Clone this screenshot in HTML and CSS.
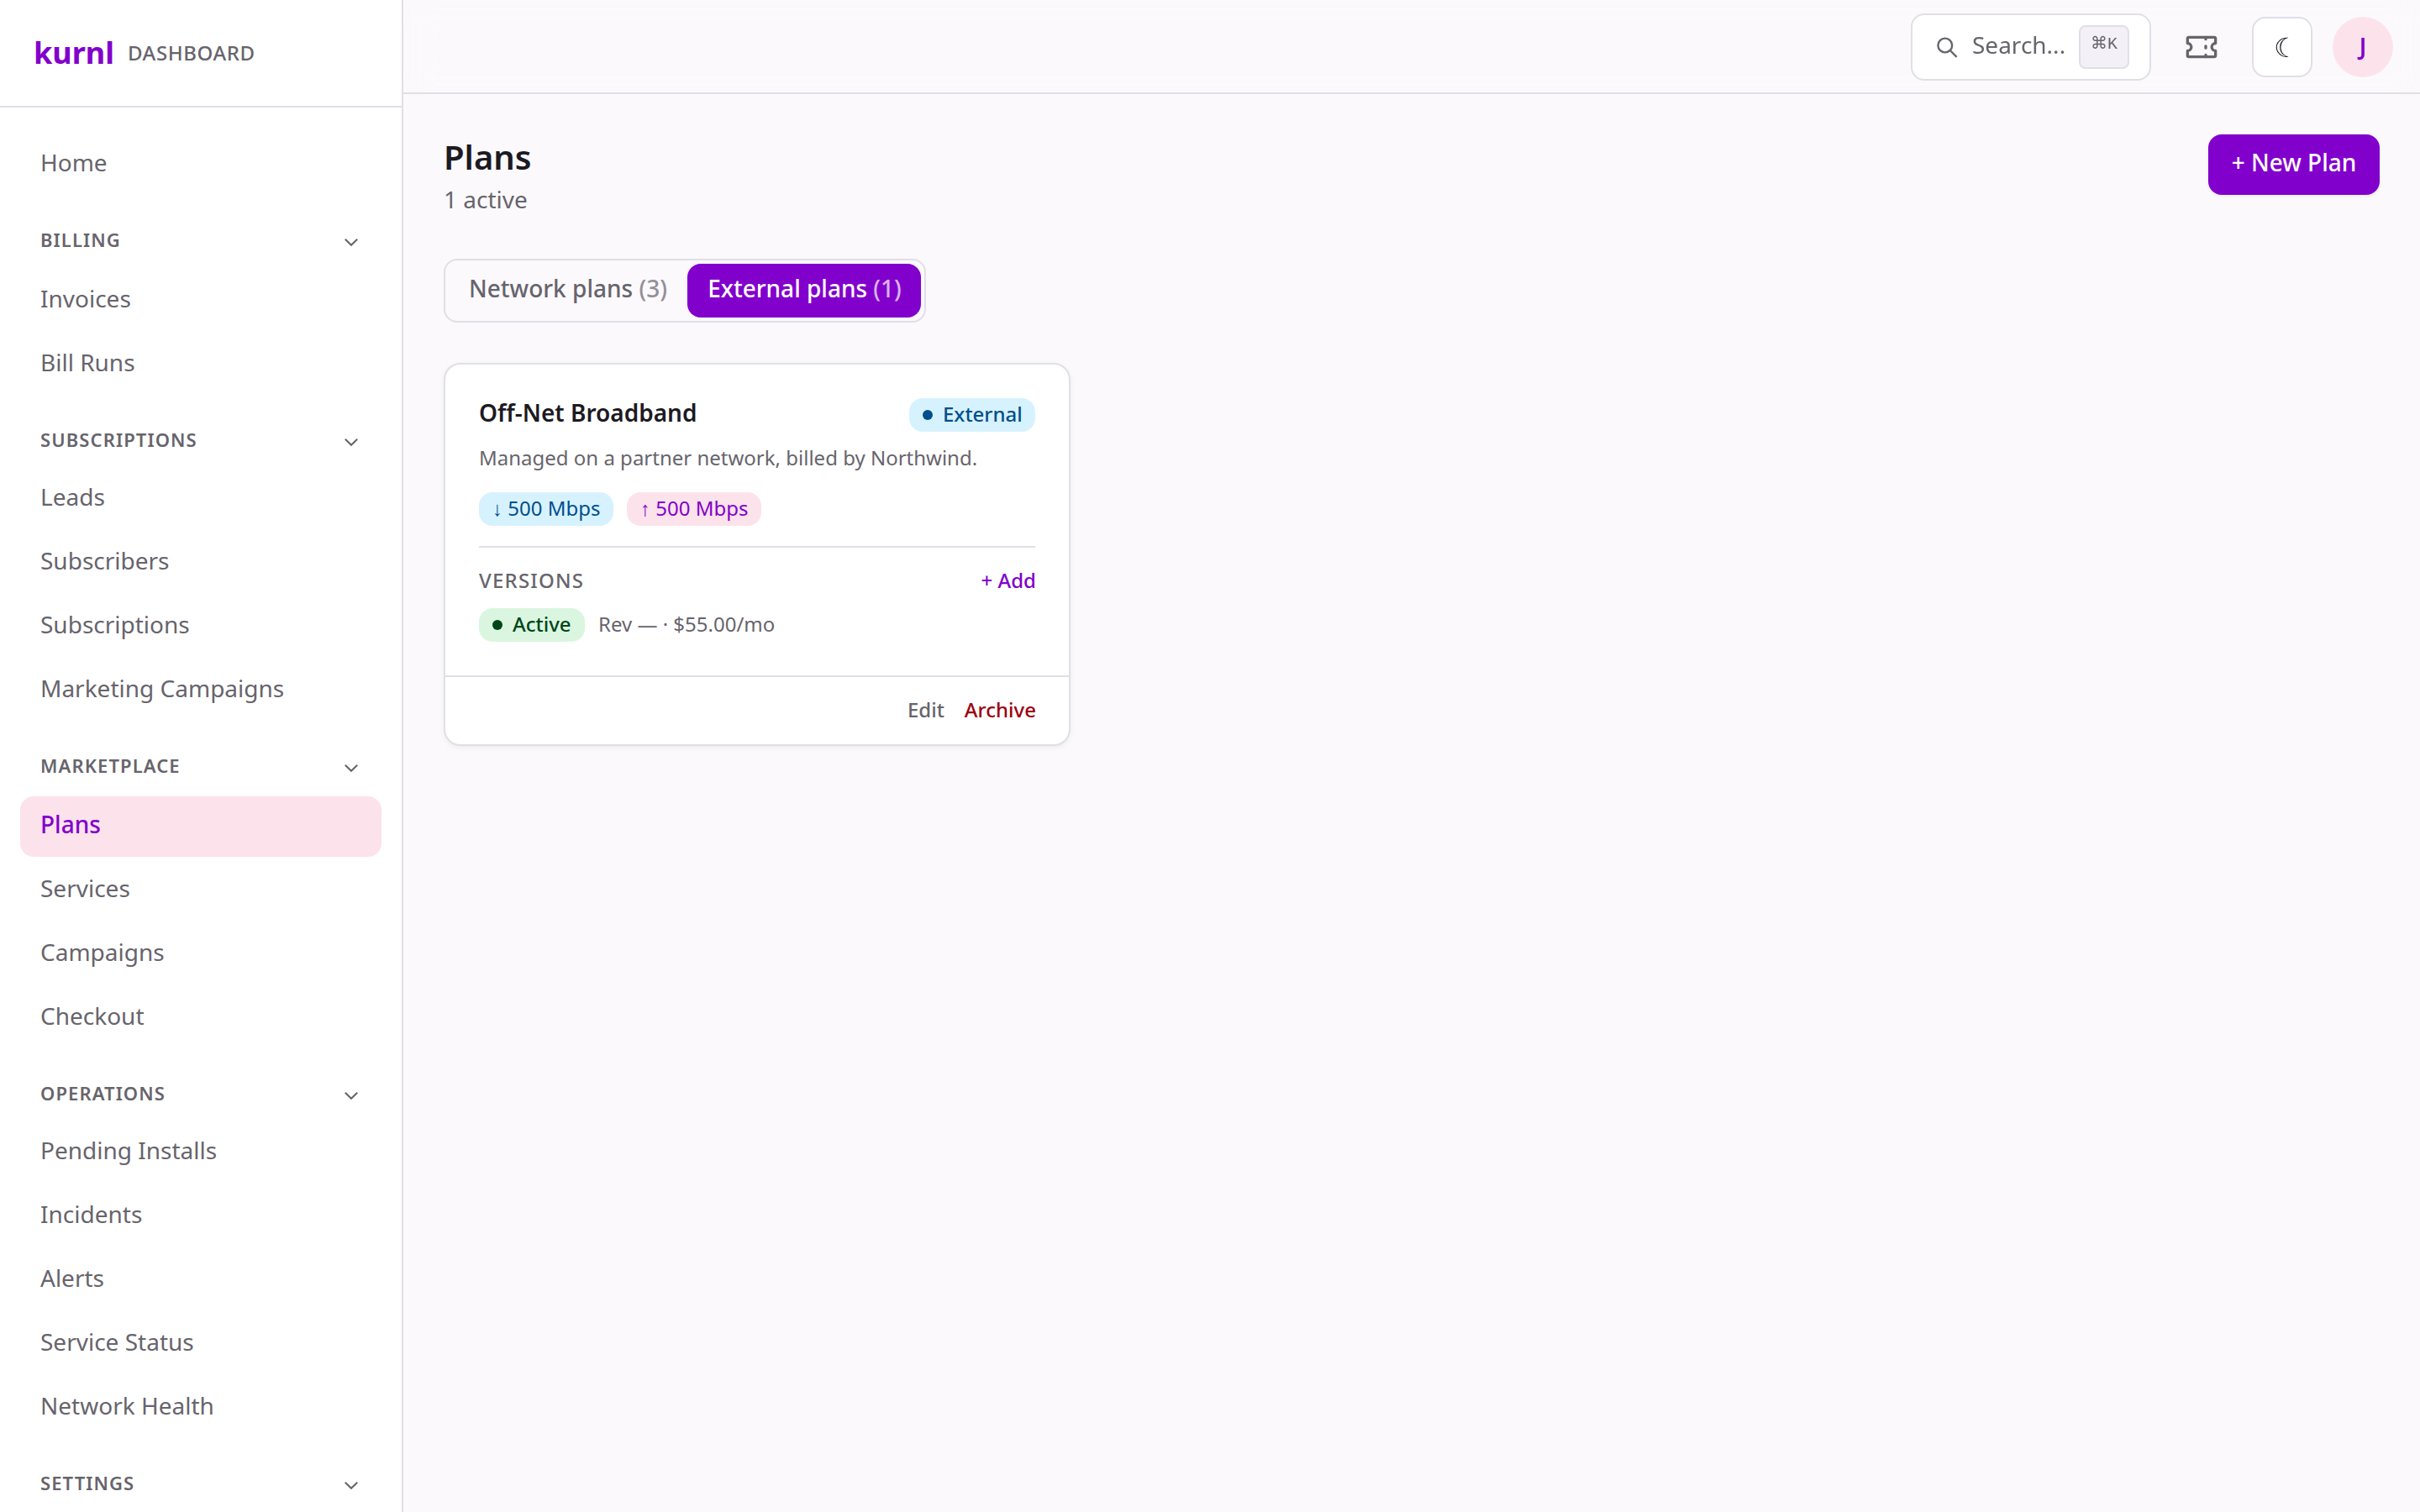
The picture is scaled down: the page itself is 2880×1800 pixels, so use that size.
FILE: index.html
```html
<!DOCTYPE html>
<html lang="en">
<head>
<meta charset="utf-8">
<title>Plans – kurnl dashboard</title>
<link rel="stylesheet" href="styles.css">
</head>
<body>
<svg class="sprite" width="0" height="0" aria-hidden="true">
  <symbol id="chevron" viewBox="0 0 24 24"><path d="M4.8 9.8 12 16.8 19.2 9.8" fill="none" stroke="currentColor" stroke-width="2.1"/></symbol>
</svg>
<div class="app">
  <aside class="sidebar">
    <div class="brand"><span class="logo">kurnl</span><span class="brand-tag">DASHBOARD</span></div>
    <nav class="nav">
      <a class="item">Home</a>
      <section class="group">
        <h2 class="group-head">Billing<svg class="chev"><use href="#chevron"/></svg></h2>
        <a class="item">Invoices</a>
        <a class="item">Bill Runs</a>
      </section>
      <section class="group tight">
        <h2 class="group-head">Subscriptions<svg class="chev"><use href="#chevron"/></svg></h2>
        <a class="item">Leads</a>
        <a class="item">Subscribers</a>
        <a class="item">Subscriptions</a>
        <a class="item">Marketing Campaigns</a>
      </section>
      <section class="group">
        <h2 class="group-head">Marketplace<svg class="chev"><use href="#chevron"/></svg></h2>
        <a class="item active">Plans</a>
        <a class="item">Services</a>
        <a class="item">Campaigns</a>
        <a class="item">Checkout</a>
      </section>
      <section class="group tight">
        <h2 class="group-head">Operations<svg class="chev"><use href="#chevron"/></svg></h2>
        <a class="item">Pending Installs</a>
        <a class="item">Incidents</a>
        <a class="item">Alerts</a>
        <a class="item">Service Status</a>
        <a class="item">Network Health</a>
      </section>
      <section class="group">
        <h2 class="group-head">Settings<svg class="chev"><use href="#chevron"/></svg></h2>
      </section>
    </nav>
  </aside>
  <div class="main">
    <header class="topbar">
      <button class="search">
        <svg class="search-icon" viewBox="0 0 28 28" fill="none" stroke="currentColor" stroke-width="2.4"><circle cx="10.8" cy="12" r="8.4"/><path d="M16.8 18 24.6 25.8"/></svg>
        <span class="search-label">Search...</span>
        <kbd class="kbd">⌘K</kbd>
      </button>
      <button class="ticket"><svg viewBox="0 0 24 24" fill="none" stroke="currentColor" stroke-width="2" stroke-linecap="round" stroke-linejoin="round"><path d="M3 5h18a1 1 0 0 1 1 1v3.3a2.7 2.7 0 0 0 0 5.4V18a1 1 0 0 1-1 1H3a1 1 0 0 1-1-1v-3.3a2.7 2.7 0 0 0 0-5.4V6a1 1 0 0 1 1-1z"/><path d="M15 5v1.4M15 11.3v1.4M15 17.6V19"/></svg></button>
      <button class="theme">☾</button>
      <span class="avatar">J</span>
    </header>
    <main class="content">
      <div class="page-head">
        <div><h1 class="title">Plans</h1><p class="subtitle">1 active</p></div>
        <button class="new-plan">+ New Plan</button>
      </div>
      <div class="tabs">
        <button class="tab">Network plans <span class="count">(3)</span></button>
        <button class="tab selected">External plans <span class="count">(1)</span></button>
      </div>
      <article class="card">
        <div class="card-body">
          <div class="card-top"><h3 class="card-title">Off-Net Broadband</h3><span class="pill blue medium external"><i class="dot"></i>External</span></div>
          <p class="desc">Managed on a partner network, billed by Northwind.</p>
          <div class="speeds"><span class="pill blue">↓ 500 Mbps</span><span class="pill pink">↑ 500 Mbps</span></div>
          <div class="versions">
            <div class="versions-head"><span class="versions-label">VERSIONS</span><a class="add">+ Add</a></div>
            <div class="version"><span class="pill green medium"><i class="dot"></i>Active</span><span class="rev">Rev — · $55.00/mo</span></div>
          </div>
        </div>
        <footer class="card-foot"><a class="edit">Edit</a><a class="archive">Archive</a></footer>
      </article>
    </main>
  </div>
</div>
</body>
</html>
```
FILE: styles.css
```css
* { box-sizing: border-box; margin: 0; padding: 0; }
:root {
  --line: #e1dfe6;
  --muted: #67646c;
  --ink: #1c1a22;
  --brand: #8200cc;
  --pink: #fce3eb;
  --page: #fbf9fc;
}
body { background: var(--page); color: var(--ink); font-family: "Noto Sans", sans-serif; font-size: 28px; line-height: 40px; overflow: hidden; }
button { font: inherit; color: inherit; border: 0; background: none; white-space: nowrap; }
.sprite { display: block; position: absolute; }
.app { display: flex; height: 1800px; }

/* Sidebar */
.sidebar { width: 480px; flex: none; background: #fff; border-right: 2px solid var(--line); overflow: hidden; }
.brand { height: 128px; border-bottom: 2px solid var(--line); padding: 0 40px; display: flex; align-items: center; gap: 16px; }
.logo { font-size: 36px; font-weight: 700; color: var(--brand); }
.brand-tag { font-size: 24px; font-weight: 500; color: var(--muted); letter-spacing: 0.6px; }
.nav { padding: 32px 24px; display: flex; flex-direction: column; }
.item { display: block; height: 72px; line-height: 40px; padding: 13px 24px 19px; border-radius: 16px; color: var(--muted); }
.item + .item { margin-top: 4px; }
.item.active { background: var(--pink); color: var(--brand); font-weight: 500; }
.group-head { height: 90px; padding: 37px 24px 21px; display: flex; justify-content: space-between; align-items: center; font-size: 22px; line-height: 32px; font-weight: 600; letter-spacing: 1.1px; text-transform: uppercase; color: var(--muted); }
.tight .group-head { height: 88px; padding-bottom: 19px; }
.chev { width: 24px; height: 24px; margin-top: 4px; }

/* Top bar */
.main { flex: 1; min-width: 0; }
.topbar { height: 112px; border-bottom: 2px solid var(--line); padding: 2px 32px 0; display: flex; align-items: center; justify-content: flex-end; gap: 24px; backdrop-filter: blur(16px); }
.search { height: 80px; width: 286px; display: flex; align-items: center; padding: 0 24px 0 28px; background: #fff; border: 2px solid var(--line); border-radius: 16px; color: var(--muted); }
.search-icon { width: 28px; height: 28px; margin-right: 15px; }
.search-label { padding-bottom: 6px; }
.kbd { margin-left: auto; height: 52px; width: 60px; border: 2px solid var(--line); border-radius: 8px; background: #f3f1f7; font-family: "Liberation Mono", "DejaVu Sans", monospace; font-size: 20px; line-height: 42px; text-align: center; }
.ticket { width: 72px; height: 72px; display: grid; place-items: center; color: var(--muted); }
.ticket svg { width: 40px; height: 40px; }
.theme { width: 72px; height: 72px; padding-left: 8px; font-size: 32px; background: #fff; border: 2px solid var(--line); border-radius: 16px; }
.avatar { width: 72px; height: 72px; border-radius: 50%; background: var(--pink); color: var(--brand); font-weight: 600; line-height: 70px; text-align: center; }

/* Page */
.content { padding: 48px; }
.page-head { display: flex; justify-content: space-between; align-items: flex-start; height: 100px; margin-bottom: 48px; }
.title { font-size: 40px; line-height: 54px; font-weight: 600; }
.subtitle { color: var(--muted); line-height: 40px; padding-top: 3px; }
.new-plan { width: 204px; height: 72px; padding: 0 0 6px; border-radius: 16px; background: var(--brand); color: #fff; font-weight: 500; box-shadow: 0 2px 4px rgba(0,0,0,.05); }
.tabs { width: 574px; display: flex; border: 2px solid var(--line); border-radius: 16px; padding: 4px; }
.tab { width: 284px; height: 64px; padding: 0 0 6px; border-radius: 16px; color: var(--muted); font-weight: 500; }
.tab.selected { width: 278px; padding-left: 1px; background: var(--brand); color: #fff; }
.count { opacity: .7; }

/* Plan card */
.card { width: 746px; margin-top: 48px; background: #fff; border: 2px solid var(--line); border-radius: 20px; box-shadow: 0 2px 6px rgba(0,0,0,.06); }
.card-body { padding: 40px; height: 370px; }
.card-top { display: flex; justify-content: space-between; }
.card-title { font-size: 28px; line-height: 34px; font-weight: 600; }
.pill { display: inline-flex; align-items: center; height: 40px; padding: 0 0 2px 16px; border-radius: 16px; font-size: 24px; line-height: 36px; white-space: nowrap; }
.speeds .pill { width: 160px; }
.pill.medium { font-weight: 500; }
.external { width: 150px; }
.version .pill { width: 126px; }
.blue { background: #d7f2ff; color: #004f8b; }
.pink { background: var(--pink); color: var(--brand); }
.green { background: #dbf6e0; color: #00461a; }
.dot { flex: none; width: 12px; height: 12px; border-radius: 50%; background: currentColor; margin: 2px 12px 0 0; }
.desc { font-size: 24px; line-height: 32px; color: var(--muted); margin-top: 15px; }
.speeds { display: flex; gap: 16px; margin-top: 25px; }
.versions { margin-top: 24px; border-top: 2px solid var(--line); padding-top: 23px; font-size: 24px; }
.versions-head { display: flex; justify-content: space-between; line-height: 32px; }
.versions-label { color: var(--muted); font-weight: 500; letter-spacing: 1.2px; }
.add { color: var(--brand); font-weight: 500; margin-right: -1px; }
.version { display: flex; gap: 16px; margin-top: 17px; }
.rev { color: var(--muted); line-height: 38px; }
.card-foot { height: 82px; border-top: 2px solid var(--line); padding: 21px 39px 0 40px; display: flex; justify-content: flex-end; gap: 24px; font-size: 24px; line-height: 36px; font-weight: 500; }
.edit { color: var(--muted); }
.archive { color: #9d0010; }
```
